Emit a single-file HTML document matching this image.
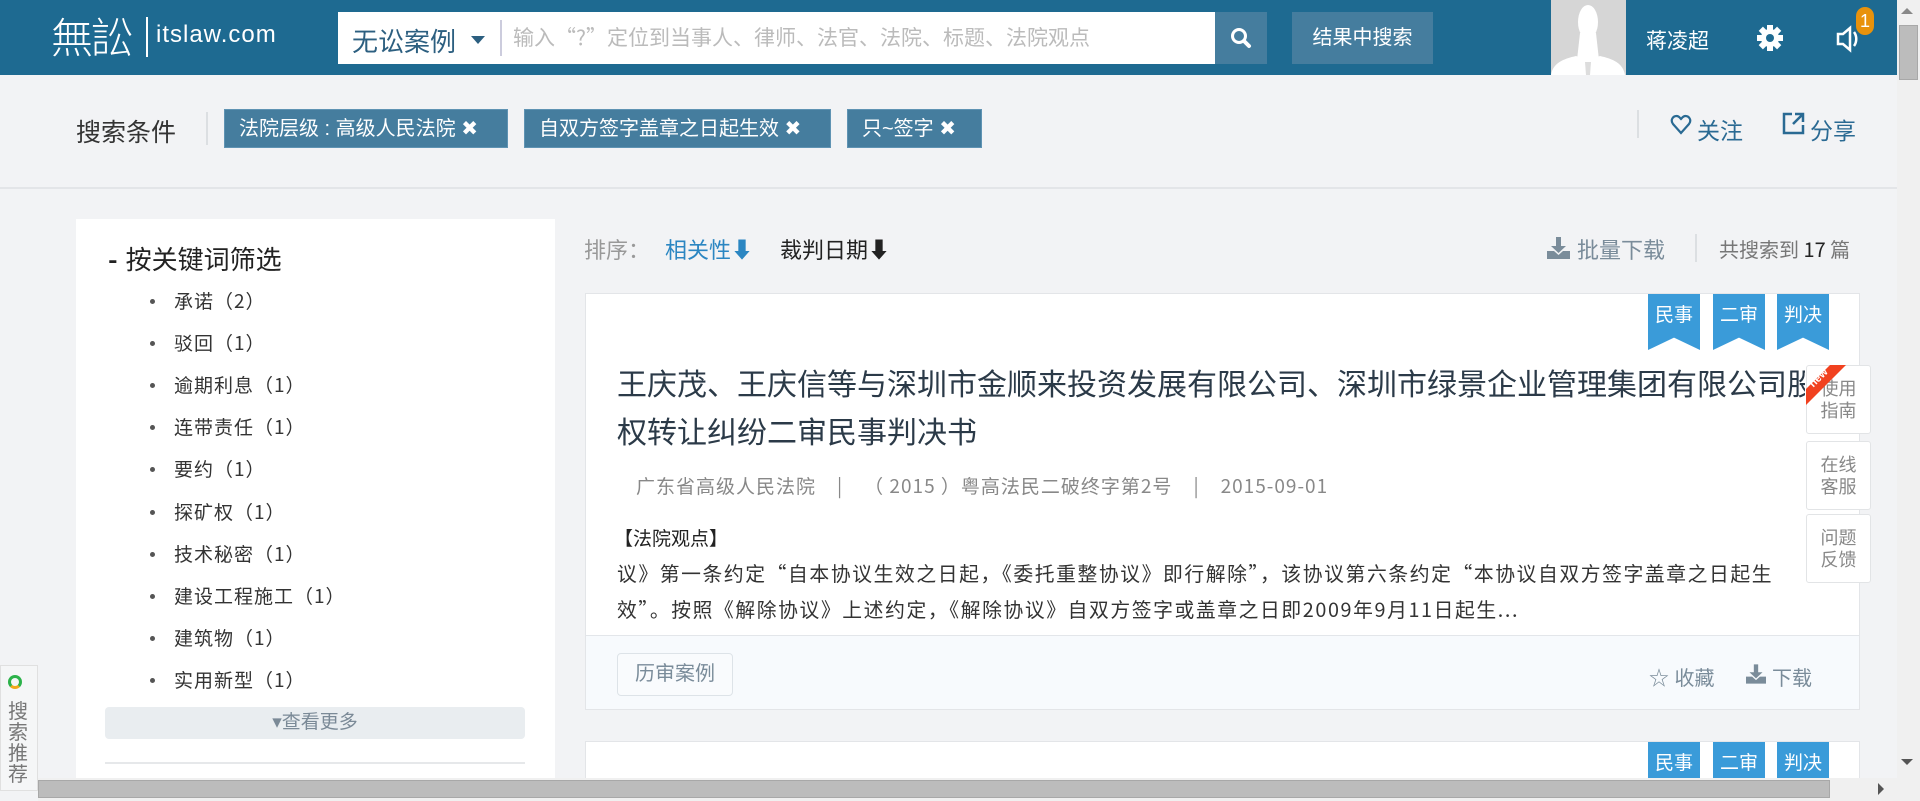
<!DOCTYPE html>
<html><head><meta charset="utf-8"><style>
*{margin:0;padding:0;box-sizing:border-box}
body{width:1920px;height:801px;overflow:hidden;background:#f2f3f5;font-family:"Liberation Sans","Noto Sans CJK SC",sans-serif;position:relative;color:#333}
.a{position:absolute;white-space:nowrap}
.n{font-family:"Noto Sans CJK SC",sans-serif}
.hdr{left:0;top:0;width:1897px;height:75px;background:#1e6a91}
.tag{top:109px;height:39px;background:#457d9e;color:#fff;font-size:20px;line-height:39px;padding-left:14px;border:1px solid #5f93b3}
.li{left:150px;font-size:19px;color:#333;font-family:"Noto Sans CJK SC",sans-serif;line-height:26px;letter-spacing:1px}
.li:before{content:"";position:absolute;left:0;top:11px;width:5px;height:5px;border-radius:50%;background:#555}
.li span{margin-left:24px}
.rib{width:52px;height:56px;background:#3a9bd9;color:#fff;font-size:19px;text-align:center;line-height:44px;clip-path:polygon(0 0,100% 0,100% 100%,50% 78%,0 100%)}
.side{left:1806px;width:65px;height:69px;background:#fff;border:1px solid #e2e4e6;border-radius:3px;color:#888;font-size:18px;line-height:22px;text-align:center;padding-top:12px;white-space:normal}
</style></head><body>
<div class="a hdr"></div>
<div class="a" style="left:51px;top:12px;font-size:42px;color:#fff;font-weight:300;letter-spacing:-2px;font-family:'Noto Sans CJK SC',sans-serif;line-height:48px">無訟</div>
<div class="a" style="left:146px;top:17px;width:2px;height:40px;background:#fff"></div>
<div class="a" style="left:156px;top:21px;font-size:24px;color:#fff;letter-spacing:1px">itslaw.com</div>
<div class="a" style="left:338px;top:12px;width:877px;height:52px;background:#fff"></div>
<div class="a" style="left:352px;top:22px;font-size:26px;color:#2c5f80">无讼案例</div>
<div class="a" style="left:471px;top:36px;width:0;height:0;border-left:7px solid transparent;border-right:7px solid transparent;border-top:8px solid #2c5f80"></div>
<div class="a" style="left:500px;top:20px;width:2px;height:36px;background:#ccd"></div>
<div class="a n" style="left:513px;top:22px;font-size:21px;color:#bbb">输入“?”定位到当事人、律师、法官、法院、标题、法院观点</div>
<div class="a" style="left:1215px;top:12px;width:52px;height:52px;background:#457d9e"></div>
<svg class="a" style="left:1229px;top:26px" width="24" height="24" viewBox="0 0 24 24"><circle cx="10" cy="10" r="6.5" fill="none" stroke="#fff" stroke-width="3"/><path d="M15 15l5 5" stroke="#fff" stroke-width="4" stroke-linecap="round"/></svg>
<div class="a" style="left:1292px;top:12px;width:141px;height:52px;background:#457d9e;color:#fff;font-size:20px;line-height:52px;text-align:center">结果中搜索</div>
<div class="a" style="left:1551px;top:0;width:75px;height:75px;background:#d6d6d6;overflow:hidden">
<svg width="75" height="75" viewBox="0 0 75 75"><ellipse cx="37" cy="22" rx="10" ry="17" fill="#fff"/><path d="M29 33h16l3 27h-22z" fill="#fff"/><path d="M0 75c2-12 12-16 25-19l12 4 12-4c13 3 23 7 25 19z" fill="#fff"/><path d="M34 62h6l-1 13h-4z" fill="#ddd"/></svg></div>
<div class="a" style="left:1646px;top:25px;font-size:21px;color:#fff">蒋凌超</div>
<svg class="a" style="left:1756px;top:24px" width="28" height="28" viewBox="0 0 28 28"><g fill="#fff"><circle cx="14" cy="14" r="9"/><rect x="11" y="1" width="6" height="26"/><rect x="1" y="11" width="26" height="6"/><rect x="11" y="1" width="6" height="26" transform="rotate(45 14 14)"/><rect x="11" y="1" width="6" height="26" transform="rotate(-45 14 14)"/></g><circle cx="14" cy="14" r="4" fill="#1e6a91"/></svg>
<svg class="a" style="left:1836px;top:25px" width="26" height="28" viewBox="0 0 26 28"><path d="M2 9h5l7-6v22l-7-6H2z" fill="none" stroke="#fff" stroke-width="2.5"/><path d="M18 7c3 4 3 10 0 14" fill="none" stroke="#fff" stroke-width="2.5"/></svg>
<div class="a" style="left:1856px;top:7px;width:18px;height:28px;border-radius:9px;background:#e8920c;color:#fff;font-size:18px;text-align:center;line-height:28px">1</div>

<div class="a" style="left:76px;top:113px;font-size:25px;color:#333">搜索条件</div>
<div class="a" style="left:206px;top:112px;width:2px;height:33px;background:#dcdfe2"></div>
<div class="a tag" style="left:224px;width:284px">法院层级 : 高级人民法院 ✖</div>
<div class="a tag" style="left:524px;width:307px">自双方签字盖章之日起生效 ✖</div>
<div class="a tag" style="left:847px;width:135px">只~签字 ✖</div>
<div class="a" style="left:1637px;top:110px;width:2px;height:28px;background:#dcdfe2"></div>
<svg class="a" style="left:1670px;top:114px" width="22" height="22" viewBox="0 0 22 22"><path d="M11 19L3 10C0 6 3 2 6.5 2 9 2 10 4 11 5c1-1 2-3 4.5-3C19 2 22 6 19 10z" fill="none" stroke="#2a6a93" stroke-width="2.2"/></svg>
<div class="a" style="left:1697px;top:112px;font-size:23px;color:#2a6a93">关注</div>
<svg class="a" style="left:1782px;top:112px" width="23" height="23" viewBox="0 0 23 23"><path d="M10 2H2v19h19v-8" fill="none" stroke="#2a6a93" stroke-width="2.5"/><path d="M13 2h8v8M21 2L11 12" fill="none" stroke="#2a6a93" stroke-width="2.5"/></svg>
<div class="a" style="left:1810px;top:112px;font-size:23px;color:#2a6a93">分享</div>
<div class="a" style="left:0;top:187px;width:1897px;height:2px;background:#e3e5e8"></div>

<div class="a" style="left:76px;top:219px;width:479px;height:560px;background:#fff"></div>
<div class="a n" style="left:108px;top:241px;font-size:26px;color:#222;line-height:36px"><b style="margin-right:8px">-</b>按关键词筛选</div>
<div class="a li" style="top:288px"><span>承诺（2）</span></div>
<div class="a li" style="top:330px"><span>驳回（1）</span></div>
<div class="a li" style="top:372px"><span>逾期利息（1）</span></div>
<div class="a li" style="top:414px"><span>连带责任（1）</span></div>
<div class="a li" style="top:456px"><span>要约（1）</span></div>
<div class="a li" style="top:499px"><span>探矿权（1）</span></div>
<div class="a li" style="top:541px"><span>技术秘密（1）</span></div>
<div class="a li" style="top:583px"><span>建设工程施工（1）</span></div>
<div class="a li" style="top:625px"><span>建筑物（1）</span></div>
<div class="a li" style="top:667px"><span>实用新型（1）</span></div>
<div class="a" style="left:105px;top:707px;width:420px;height:32px;background:#e9edf0;border-radius:4px;color:#7b8a97;font-size:19px;text-align:center;line-height:32px">▾查看更多</div>
<div class="a" style="left:105px;top:762px;width:420px;height:2px;background:#e6e8ea"></div>

<div class="a n" style="left:584px;top:233px;font-size:22px;color:#999">排序：</div>
<div class="a n" style="left:665px;top:233px;font-size:22px;color:#2b86c2">相关性⬇</div>
<div class="a n" style="left:780px;top:233px;font-size:22px;color:#222">裁判日期⬇</div>
<svg class="a" style="left:1547px;top:237px" width="23" height="22" viewBox="0 0 23 22"><path d="M9 0h5v9h5l-7.5 7L4 9h5z" fill="#7a8c9a"/><path d="M0 14h7l4.5 4 4.5-4h7v8H0z" fill="#7a8c9a"/></svg>
<div class="a n" style="left:1577px;top:233px;font-size:22px;color:#7a8c9a">批量下载</div>
<div class="a" style="left:1695px;top:234px;width:2px;height:28px;background:#dcdfe2"></div>
<div class="a n" style="left:1719px;top:234px;font-size:20px;color:#777">共搜索到 <span style="color:#222">17</span> 篇</div>

<div class="a" style="left:585px;top:293px;width:1275px;height:417px;background:#fff;border:1px solid #e3e5e8"></div>
<div class="a rib" style="left:1648px;top:294px">民事</div>
<div class="a rib" style="left:1713px;top:294px">二审</div>
<div class="a rib" style="left:1777px;top:294px">判决</div>
<div class="a" style="left:617px;top:362px;width:1188px;overflow:hidden;font-size:30px;color:#2b3a48;line-height:48px">王庆茂、王庆信等与深圳市金顺来投资发展有限公司、深圳市绿景企业管理集团有限公司股<br>权转让纠纷二审民事判决书</div>
<div class="a n" style="left:636px;top:472px;font-size:19px;color:#888;letter-spacing:1px">广东省高级人民法院 &nbsp;&nbsp;&nbsp;| &nbsp;&nbsp;&nbsp;（ 2015 ）粤高法民二破终字第2号 &nbsp;&nbsp;&nbsp;| &nbsp;&nbsp;&nbsp;2015-09-01</div>
<div class="a n" style="left:614px;top:524px;font-size:19px;color:#222">【法院观点】</div>
<div class="a n" style="left:617px;top:555px;font-size:19.8px;color:#333;line-height:36px;letter-spacing:1.6px">议》第一条约定“自本协议生效之日起，《委托重整协议》即行解除”，该协议第六条约定“本协议自双方签字盖章之日起生<br>效”。按照《解除协议》上述约定，《解除协议》自双方签字或盖章之日即2009年9月11日起生...</div>
<div class="a" style="left:586px;top:635px;width:1273px;height:74px;background:#f7fafd;border-top:1px solid #e3e6ea"></div>
<div class="a" style="left:617px;top:653px;width:116px;height:43px;border:1px solid #dde3e8;border-radius:4px;background:#f9fbfd;color:#7a8c9a;font-size:20px;text-align:center;line-height:41px">历审案例</div>
<div class="a" style="left:1649px;top:662px;font-size:20px;color:#7a8c9a">☆ 收藏</div>
<svg class="a" style="left:1746px;top:664px" width="20" height="20" viewBox="0 0 23 22"><path d="M9 0h5v9h5l-7.5 7L4 9h5z" fill="#7a8c9a"/><path d="M0 14h7l4.5 4 4.5-4h7v8H0z" fill="#7a8c9a"/></svg>
<div class="a" style="left:1772px;top:662px;font-size:20px;color:#7a8c9a">下载</div>

<div class="a" style="left:585px;top:741px;width:1275px;height:40px;background:#fff;border:1px solid #e3e5e8"></div>
<div class="a rib" style="left:1648px;top:742px">民事</div>
<div class="a rib" style="left:1713px;top:742px">二审</div>
<div class="a rib" style="left:1777px;top:742px">判决</div>

<div class="a side" style="top:365px">使用<br>指南</div>
<div class="a" style="left:1806px;top:365px;width:40px;height:40px;background:#f1411f;clip-path:polygon(0 60%,60% 0,100% 0,0 100%)"></div>
<div class="a" style="left:1808px;top:372px;font-size:11px;color:#fff;font-weight:bold;transform:rotate(-45deg)">new</div>
<div class="a side" style="top:441px">在线<br>客服</div>
<div class="a side" style="top:514px">问题<br>反馈</div>

<div class="a" style="left:0;top:665px;width:38px;height:126px;background:#f5f6f7;border:1px solid #e0e0e0"></div>
<div class="a" style="left:8px;top:675px;width:14px;height:14px;border-radius:50%;border:3px solid #2cb24a;border-bottom-color:#f0a81c"></div>
<div class="a" style="left:8px;top:702px;width:20px;font-size:20px;line-height:21px;color:#777;white-space:normal">搜索推荐</div>

<div class="a" style="left:38px;top:778px;width:1859px;height:23px;background:#f0f0f0"></div>
<div class="a" style="left:38px;top:780px;width:1792px;height:18px;background:#bcbcbc;border:1px solid #a8a8a8"></div>
<div class="a" style="left:1878px;top:783px;width:0;height:0;border-top:6px solid transparent;border-bottom:6px solid transparent;border-left:6px solid #555"></div>
<div class="a" style="left:1897px;top:0;width:23px;height:801px;background:#f0f0f0"></div>
<div class="a" style="left:1901px;top:8px;border-left:6px solid transparent;border-right:6px solid transparent;border-bottom:6px solid #888"></div>
<div class="a" style="left:1899px;top:25px;width:19px;height:55px;background:#bcbcbc;border:1px solid #a8a8a8"></div>
<div class="a" style="left:1901px;top:759px;border-left:6px solid transparent;border-right:6px solid transparent;border-top:6px solid #555"></div>
</body></html>
